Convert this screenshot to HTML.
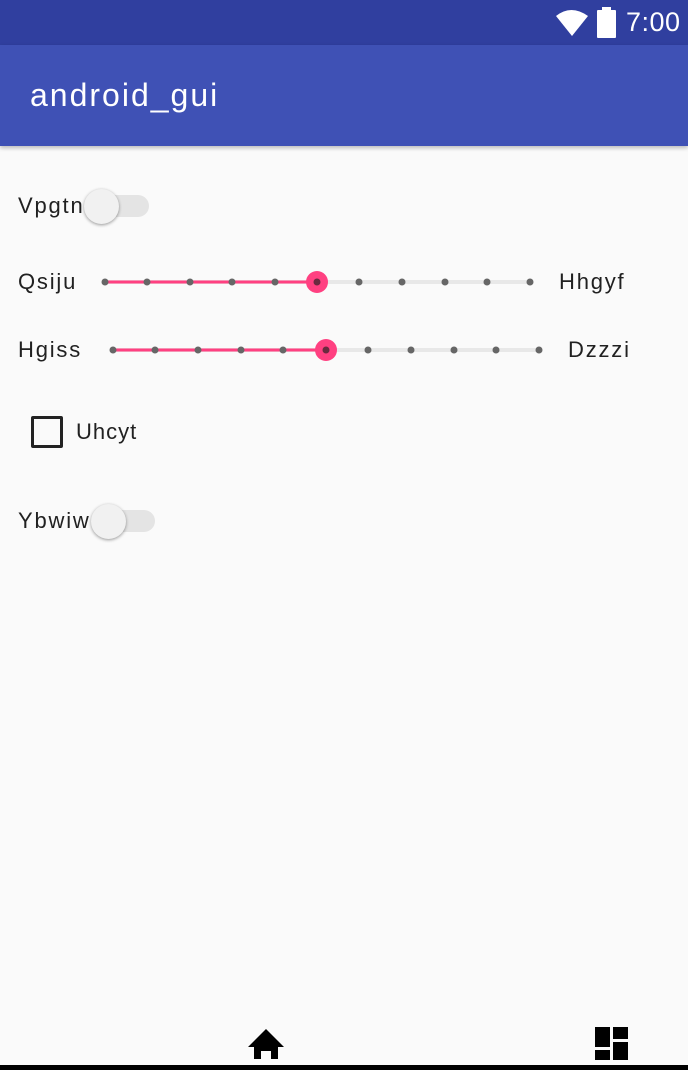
<!DOCTYPE html><html><head><style>
body{margin:0;width:688px;height:1070px;background:#fafafa;font-family:"Liberation Sans",Roboto,sans-serif;position:relative;overflow:hidden}
.a{position:absolute}
.t{font-size:22px;color:#212121;letter-spacing:1.8px}
</style></head><body>
<div class="a" style="left:0;top:0;width:688px;height:45px;background:#303f9f"></div>
<svg class="a" style="left:554px;top:8px" width="38" height="30"><path d="M2 8 Q17 -4 34 8 L18 28 Z" fill="#fff"/></svg>
<div class="a" style="left:597px;top:10px;width:19px;height:28px;background:#fff;border-radius:1px"></div>
<div class="a" style="left:602px;top:7px;width:9px;height:4px;background:#fff"></div>
<div class="a" style="left:626px;top:7px;color:#fff;font-size:27px;letter-spacing:0.5px">7:00</div>
<div class="a" style="left:0;top:45px;width:688px;height:101px;background:#3f51b5;box-shadow:0 2px 4px rgba(0,0,0,.25)"></div>
<div class="a" style="left:30px;top:77px;color:#fff;font-size:32px;letter-spacing:2px">android_gui</div>

<div class="a t" style="left:18px;top:193px">Vpgtn</div>
<div class="a" style="left:93px;top:195px;width:56px;height:22px;border-radius:11px;background:#e4e4e4"></div>
<div class="a" style="left:84px;top:189px;width:35px;height:35px;border-radius:50%;background:#f1f1f1;box-shadow:0 1px 3px rgba(0,0,0,.4)"></div>

<div class="a t" style="left:18px;top:269px">Qsiju</div>
<div class="a t" style="left:559px;top:269px">Hhgyf</div>
<svg class="a" style="left:0;top:260px" width="688" height="110">
<line x1="105" y1="22" x2="530" y2="22" stroke="#e8e8e8" stroke-width="4"/>
<line x1="105" y1="22" x2="317" y2="22" stroke="#ff4081" stroke-width="3"/>
<g fill="#666"><circle cx="105" cy="22" r="3.5"/><circle cx="147" cy="22" r="3.5"/><circle cx="190" cy="22" r="3.5"/><circle cx="232" cy="22" r="3.5"/><circle cx="275" cy="22" r="3.5"/><circle cx="359" cy="22" r="3.5"/><circle cx="402" cy="22" r="3.5"/><circle cx="445" cy="22" r="3.5"/><circle cx="487" cy="22" r="3.5"/><circle cx="530" cy="22" r="3.5"/></g>
<circle cx="317" cy="22" r="11" fill="#ff4081"/><circle cx="317" cy="22" r="3.5" fill="#6a2a3f"/>
<line x1="113" y1="90" x2="539" y2="90" stroke="#e8e8e8" stroke-width="4"/>
<line x1="113" y1="90" x2="326" y2="90" stroke="#ff4081" stroke-width="3"/>
<g fill="#666"><circle cx="113" cy="90" r="3.5"/><circle cx="155" cy="90" r="3.5"/><circle cx="198" cy="90" r="3.5"/><circle cx="241" cy="90" r="3.5"/><circle cx="283" cy="90" r="3.5"/><circle cx="368" cy="90" r="3.5"/><circle cx="411" cy="90" r="3.5"/><circle cx="454" cy="90" r="3.5"/><circle cx="496" cy="90" r="3.5"/><circle cx="539" cy="90" r="3.5"/></g>
<circle cx="326" cy="90" r="11" fill="#ff4081"/><circle cx="326" cy="90" r="3.5" fill="#6a2a3f"/>
</svg>
<div class="a t" style="left:18px;top:337px">Hgiss</div>
<div class="a t" style="left:568px;top:337px">Dzzzi</div>

<div class="a" style="left:31px;top:416px;border:3px solid #222;border-radius:2px;box-sizing:border-box;width:32px;height:32px"></div>
<div class="a t" style="left:76px;top:419px;letter-spacing:1px">Uhcyt</div>

<div class="a t" style="left:18px;top:508px">Ybwiw</div>
<div class="a" style="left:99px;top:510px;width:56px;height:22px;border-radius:11px;background:#e4e4e4"></div>
<div class="a" style="left:91px;top:504px;width:35px;height:35px;border-radius:50%;background:#f1f1f1;box-shadow:0 1px 3px rgba(0,0,0,.4)"></div>

<svg class="a" style="left:248px;top:1027px" width="38" height="34"><path d="M18 2 L36 20 L30 20 L30 32 L23 32 L23 24 L13 24 L13 32 L6 32 L6 20 L0 20 Z" fill="#000"/></svg>
<svg class="a" style="left:595px;top:1027px" width="34" height="34"><rect x="0" y="0" width="15" height="20" fill="#000"/><rect x="18" y="0" width="15" height="12" fill="#000"/><rect x="0" y="23" width="15" height="10" fill="#000"/><rect x="18" y="15" width="15" height="18" fill="#000"/></svg>
<div class="a" style="left:0;top:1065px;width:688px;height:5px;background:#000"></div>
</body></html>
